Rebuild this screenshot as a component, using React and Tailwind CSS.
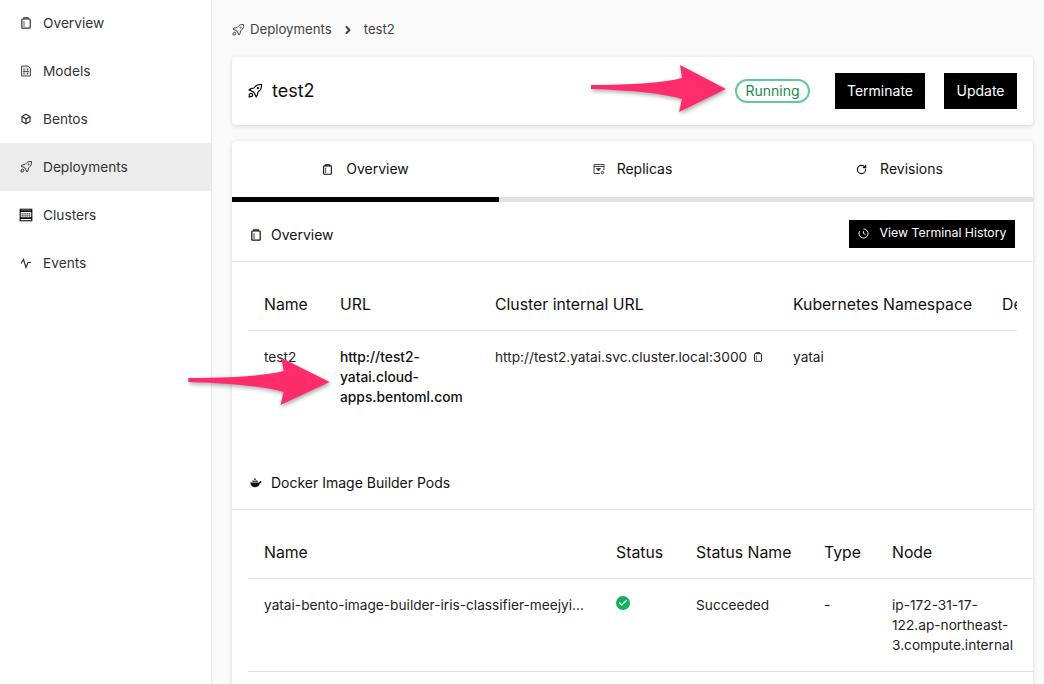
import { GrDeploy } from 'react-icons/gr'
import { Check, ChevronRight, RotateCw } from 'lucide-react'

function ClipboardIcon({ className = 'w-3 h-3' }) {
    return (
        <svg viewBox="0 0 12 12" className={className} fill="none" stroke="currentColor" strokeWidth="1.2">
            <rect x="1.8" y="2" width="8.4" height="9.2" rx="0.8" />
            <path d="M3.800 2.200V0.800h4.400v1.400" />
            <path d="M4 4v6" strokeWidth="0.8" />
        </svg>
    )
}

function ModelIcon() {
    return (
        <svg viewBox="0 0 12 12" className="w-3 h-3" fill="#ddd" stroke="#555" strokeWidth="1">
            <path d="M1.5 1h6.5l2.500 2.500v7.500h-9z" />
            <path d="M4 3.500v2M7.500 3.500v2M4 7.500v2M7.500 7.500v2M3 6.500h6" fill="none" strokeWidth="1" />
        </svg>
    )
}

function BoxIcon() {
    return (
        <svg viewBox="0 0 12 12" className="w-3 h-3" fill="none" stroke="currentColor" strokeWidth="1.200">
            <path d="M6 1.200l4 2.300v5L6 10.800 2 8.500v-5z" />
            <path d="M2 3.500L6 6l4-2.500M6 6v4.800" />
        </svg>
    )
}

function ClusterIcon() {
    return (
        <svg viewBox="0 0 12 12" className="w-3 h-3 scale-110" fill="none" stroke="#000">
            <rect x="0.600" y="0.600" width="10.800" height="10.800" strokeWidth="1.200" />
            <path d="M0.600 2.400h10.800M0.600 8.800h10.800" strokeWidth="1.600" />
            <path d="M2 5h8M2 6.800h8" strokeWidth="1" strokeDasharray="1 0.700" />
        </svg>
    )
}

function PulseIcon() {
    return (
        <svg viewBox="0 0 12 12" className="w-3 h-3" fill="none" stroke="currentColor" strokeWidth="1.200">
            <path d="M1 6.500L3.500 2.500l2.500 8 2-5h3" />
        </svg>
    )
}

function ReplicaIcon() {
    return (
        <svg viewBox="0 0 12 12" className="w-3 h-3" fill="none" stroke="#444" strokeWidth="1">
            <path d="M11 7V1.500H1v9h6" />
            <path d="M1 3.500h10" />
            <path d="M3.500 5.500h4l-2 2.500z" fill="#444" />
            <circle cx="9.500" cy="9.500" r="1.200" />
        </svg>
    )
}

function DockerIcon() {
    return (
        <svg viewBox="0 0 12 12" className="w-3 h-3" fill="currentColor">
            <path d="M0.200 5.500h8.800c.5-.9 1.100-1.300 2.700-1.100-.3 1-.8 1.500-1.700 1.700C9.200 9.400 7.400 10.200 5 10.200 2.200 10.200 .7 8.600.2 5.500z" />
            <path d="M2.500 3.400h1.400v1.700H2.500zM4.300 3.400h1.400v1.700H4.300zM6.100 3.400h1.400v1.700H6.100zM4.300 1.500h1.400v1.600H4.300z" />
        </svg>
    )
}

function HistoryIcon() {
    return (
        <svg viewBox="0 0 12 12" className="w-[11px] h-[11px]" fill="none" stroke="currentColor" strokeWidth="1">
            <path d="M6 1a5 5 0 1 1-4.300 2.500" />
            <path d="M6 3.500V6l2 1" />
        </svg>
    )
}

const NAV = [
    { label: 'Overview', icon: <ClipboardIcon /> },
    { label: 'Models', icon: <ModelIcon /> },
    { label: 'Bentos', icon: <BoxIcon /> },
    { label: 'Deployments', icon: <GrDeploy className="w-3 h-3" />, active: true },
    { label: 'Clusters', icon: <ClusterIcon /> },
    { label: 'Events', icon: <PulseIcon /> },
]

function Arrow({ className, width }) {
    // the annotation arrows drawn over the screenshot
    return (
        <svg
            viewBox="0 0 148 58"
            preserveAspectRatio="none"
            width={width}
            height={58}
            className={className}
            style={{ filter: 'drop-shadow(1px 2px 2px rgba(0,0,0,0.35))' }}
        >
            <path d="M6 25Q70 25 97 18L95 5 141 29 94 52 97 39Q70 31 6 29z" fill="#fe2c6a" />
        </svg>
    )
}

function SectionTitle({ icon, children, right }) {
    return (
        <div className="h-[60px] pt-1.5 px-[18px] flex items-center justify-between border-b border-[#e2e2e2]">
            <div className="flex items-center gap-[9px] text-sm text-[#111]">
                {icon}
                <span>{children}</span>
            </div>
            {right}
        </div>
    )
}

export default function App() {
    return (
        <div className="relative h-[684px] overflow-hidden flex bg-[#fafafa] text-black font-['Inter',sans-serif]">
            <aside className="w-[212px] shrink-0 bg-white border-r border-[#e8e8e8] -mt-px">
                {NAV.map(({ label, icon, active }) => (
                    <div
                        key={label}
                        className={`h-12 pl-5 flex items-center gap-[11px] text-[13.7px] text-[#333] ${active ? 'bg-[#ececec]' : ''}`}
                    >
                        {icon}
                        <span>{label}</span>
                    </div>
                ))}
            </aside>

            <main className="flex-1 min-w-0 pl-5 pr-[11px]">
                <div className="h-[57px] pt-0.5 flex items-center text-[13.2px] text-[#444]">
                    <GrDeploy className="w-3 h-3 mr-1.5" />
                    <span>Deployments</span>
                    <ChevronRight className="w-3 h-3 mx-[10px] stroke-[4]" />
                    <span>test2</span>
                </div>

                <div className="h-[68px] bg-white rounded-sm shadow-[0_1px_4px_rgba(0,0,0,0.16)] pl-4 pr-4 flex items-center">
                    <GrDeploy className="w-[14px] h-[14px] mr-2.5" />
                    <span className="text-lg text-[#111]">test2</span>
                    <span className="ml-auto h-6 w-[75px] rounded-full border-2 border-[#5fcb9c] text-[#1a8a50] text-sm flex items-center justify-center">
                        Running
                    </span>
                    <button className="ml-[25px] w-[90px] h-9 bg-black text-white text-sm">Terminate</button>
                    <button className="ml-[19px] w-[73px] h-9 bg-black text-white text-sm">Update</button>
                </div>

                <div className="mt-4 bg-white rounded-t-sm shadow-[0_1px_4px_rgba(0,0,0,0.16)] h-[600px]">
                    <div className="flex h-[61px] text-sm text-[#111]">
                        <div className="flex-1 flex flex-col">
                            <div className="flex-1 flex items-center justify-center gap-[13px]">
                                <ClipboardIcon className="w-[11px] h-[11px]" />
                                <span>Overview</span>
                            </div>
                            <div className="h-[5px] bg-black" />
                        </div>
                        <div className="flex-1 flex flex-col">
                            <div className="flex-1 flex items-center justify-center gap-3">
                                <ReplicaIcon />
                                <span>Replicas</span>
                            </div>
                            <div className="h-[5px] bg-[#e2e2e2]" />
                        </div>
                        <div className="flex-1 flex flex-col">
                            <div className="flex-1 flex items-center justify-center gap-[13px]">
                                <RotateCw className="w-[11px] h-[11px] stroke-[2.5]" />
                                <span>Revisions</span>
                            </div>
                            <div className="h-[5px] bg-[#e2e2e2]" />
                        </div>
                    </div>

                    <SectionTitle
                        icon={<ClipboardIcon />}
                        right={
                            <button className="-mt-0.5 w-[166px] h-7 bg-black text-white text-[12.3px] flex items-center justify-center gap-[11px]">
                                <HistoryIcon />
                                <span>View Terminal History</span>
                            </button>
                        }
                    >
                        Overview
                    </SectionTitle>

                    <div className="mx-4 mt-4 h-[172px] overflow-hidden">
                        <div className="flex h-[53px] pt-0.5 items-center border-b border-[#e2e2e2] text-[15.8px] text-[#111]">
                            <div className="w-[92px] pl-4 shrink-0">Name</div>
                            <div className="w-[155px] shrink-0">URL</div>
                            <div className="w-[298px] shrink-0">Cluster internal URL</div>
                            <div className="w-[209px] shrink-0 whitespace-nowrap">Kubernetes Namespace</div>
                            <div className="w-[15px] shrink-0 overflow-hidden">Description</div>
                        </div>
                        <div className="flex pt-4 text-[13.7px] leading-5 text-[#222]">
                            <div className="w-[92px] pl-4 shrink-0">test2</div>
                            <div className="w-[155px] pr-5 shrink-0 font-medium text-[13.8px] text-[#111]">
                                http://test2-yatai.cloud-apps.bentoml.com
                            </div>
                            <div className="w-[298px] shrink-0 flex items-center self-start gap-1 whitespace-nowrap">
                                http://test2.yatai.svc.cluster.local:3000
                                <ClipboardIcon className="w-2.5 h-2.5 ml-0.5" />
                            </div>
                            <div className="shrink-0">yatai</div>
                        </div>
                    </div>

                    <SectionTitle icon={<DockerIcon />}>Docker Image Builder Pods</SectionTitle>

                    <div className="ml-4 mt-4">
                        <div className="flex h-[53px] pt-0.5 items-center border-b border-[#e2e2e2] text-[15.8px] text-[#111]">
                            <div className="w-[368px] pl-4 shrink-0">Name</div>
                            <div className="w-[80px] shrink-0">Status</div>
                            <div className="w-[128px] shrink-0">Status Name</div>
                            <div className="w-[68px] shrink-0">Type</div>
                            <div className="shrink-0">Node</div>
                        </div>
                        <div className="flex h-[93px] pt-4 border-b border-[#e2e2e2] text-[13.7px] leading-5 text-[#222]">
                            <div className="w-[368px] pl-4 pr-4 shrink-0 truncate">
                                yatai-bento-image-builder-iris-classifier-meejyi...
                            </div>
                            <div className="w-[80px] shrink-0 pt-px">
                                <span className="w-3.5 h-3.5 rounded-full bg-[#10b05c] flex items-center justify-center">
                                    <Check className="w-2.5 h-2.5 text-white stroke-[3]" />
                                </span>
                            </div>
                            <div className="w-[128px] shrink-0">Succeeded</div>
                            <div className="w-[68px] shrink-0">-</div>
                            <div className="w-[130px] shrink-0">ip-172-31-17-122.ap-northeast-3.compute.internal</div>
                        </div>
                    </div>
                </div>
            </main>

            <Arrow className="absolute left-[585px] top-[60px]" width={148} />
            <Arrow className="absolute left-[182px] top-[353px]" width={155} />
        </div>
    )
}
